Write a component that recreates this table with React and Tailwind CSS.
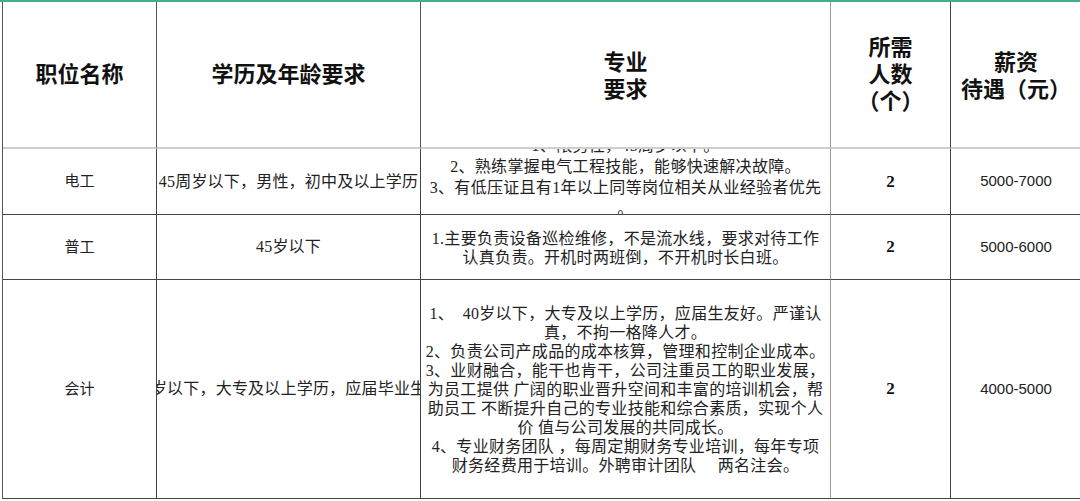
import React from 'react';

const serif = { fontFamily: '"Liberation Serif", "Noto Sans CJK SC", serif' };

const rows = [
  {
    name: '电工',
    edu: '45周岁以下，男性，初中及以上学历',
    lines: [
      '1、限男性，45周岁以下。',
      '2、熟练掌握电气工程技能，能够快速解决故障。',
      '3、有低压证且有1年以上同等岗位相关从业经验者优先',
      '。',
    ],
    count: '2',
    pay: '5000-7000',
    h: 'h-[66px]',
    lead: 'leading-[21px] pb-[10px]',
  },
  {
    name: '普工',
    edu: '45岁以下',
    lines: [
      '1.主要负责设备巡检维修，不是流水线，要求对待工作',
      '认真负责。开机时两班倒，不开机时长白班。',
    ],
    count: '2',
    pay: '5000-6000',
    h: 'h-[65px]',
    lead: 'leading-[19px] pt-[2px]',
  },
  {
    name: '会计',
    edu: '40周岁以下，大专及以上学历，应届毕业生优先',
    lines: [
      '1、  40岁以下，大专及以上学历，应届生友好。严谨认',
      '真，不拘一格降人才。',
      '2、负责公司产成品的成本核算，管理和控制企业成本。',
      '3、业财融合，能干也肯干，公司注重员工的职业发展，',
      '为员工提供 广阔的职业晋升空间和丰富的培训机会，帮',
      '助员工 不断提升自己的专业技能和综合素质，实现个人',
      '价 值与公司发展的共同成长。',
      '4、专业财务团队 ，每周定期财务专业培训，每年专项',
      '财务经费用于培训。外聘审计团队     两名注会。',
    ],
    count: '2',
    pay: '4000-5000',
    h: 'h-[219px]',
    lead: 'leading-[19px]',
  },
];

function HeadCell({ children, className = '' }) {
  return (
    <div
      className={`flex flex-col items-center justify-center text-center text-[22px] font-bold leading-[27px] text-[#111] border-b-2 border-b-[#cfcfcf] ${className}`}
      style={serif}
    >
      {children}
    </div>
  );
}

export default function App() {
  return (
    <div className="w-[1080px] h-[501px] overflow-hidden bg-white border-t-2 border-[#3fae8a] pl-[2px]">
      <div className="grid grid-cols-[154px_264px_410px_120px_130px] border-l border-[#555]">
        {/* header */}
        <HeadCell className="h-[147px] border-r border-r-[#555]">职位名称</HeadCell>
        <HeadCell className="h-[147px] border-r border-r-[#555]">学历及年龄要求</HeadCell>
        <HeadCell className="h-[147px] border-r border-r-[#9a9a9a] pt-[2px]">
          <span>专业</span>
          <span>要求</span>
        </HeadCell>
        <HeadCell className="h-[147px] border-r border-r-[#444]">
          <span>所需</span>
          <span>人数</span>
          <span>（个）</span>
        </HeadCell>
        <HeadCell className="h-[147px] pt-[2px]">
          <span>薪资</span>
          <span>待遇（元）</span>
        </HeadCell>

        {rows.map((r) => (
          <React.Fragment key={r.name}>
            <div
              className={`${r.h} flex items-center justify-center border-r border-b border-[#444] text-[15px] text-[#222]`}
              style={serif}
            >
              {r.name}
            </div>
            <div
              className={`${r.h} flex items-center justify-center overflow-hidden border-r border-b border-[#444] text-[16px] tracking-[0.2px] text-[#222]`}
              style={serif}
            >
              <span className="whitespace-nowrap shrink-0">{r.edu}</span>
            </div>
            <div
              className={`${r.h} ${r.lead} flex items-center justify-center overflow-hidden border-r border-r-[#9a9a9a] border-b border-b-[#444] text-[16px] tracking-[0.3px] text-[#222]`}
              style={serif}
            >
              <div className="flex flex-col items-center shrink-0">
                {r.lines.map((l, i) => (
                  <span key={i} className="whitespace-pre">{l}</span>
                ))}
              </div>
            </div>
            <div
              className={`${r.h} flex items-center justify-center border-r border-b border-[#444] text-[17px] font-bold text-[#111]`}
              style={serif}
            >
              {r.count}
            </div>
            <div
              className={`${r.h} flex items-center justify-center border-b border-[#444] text-[15px] text-[#222] font-['Liberation_Sans',sans-serif]`}
            >
              {r.pay}
            </div>
          </React.Fragment>
        ))}
      </div>
    </div>
  );
}
